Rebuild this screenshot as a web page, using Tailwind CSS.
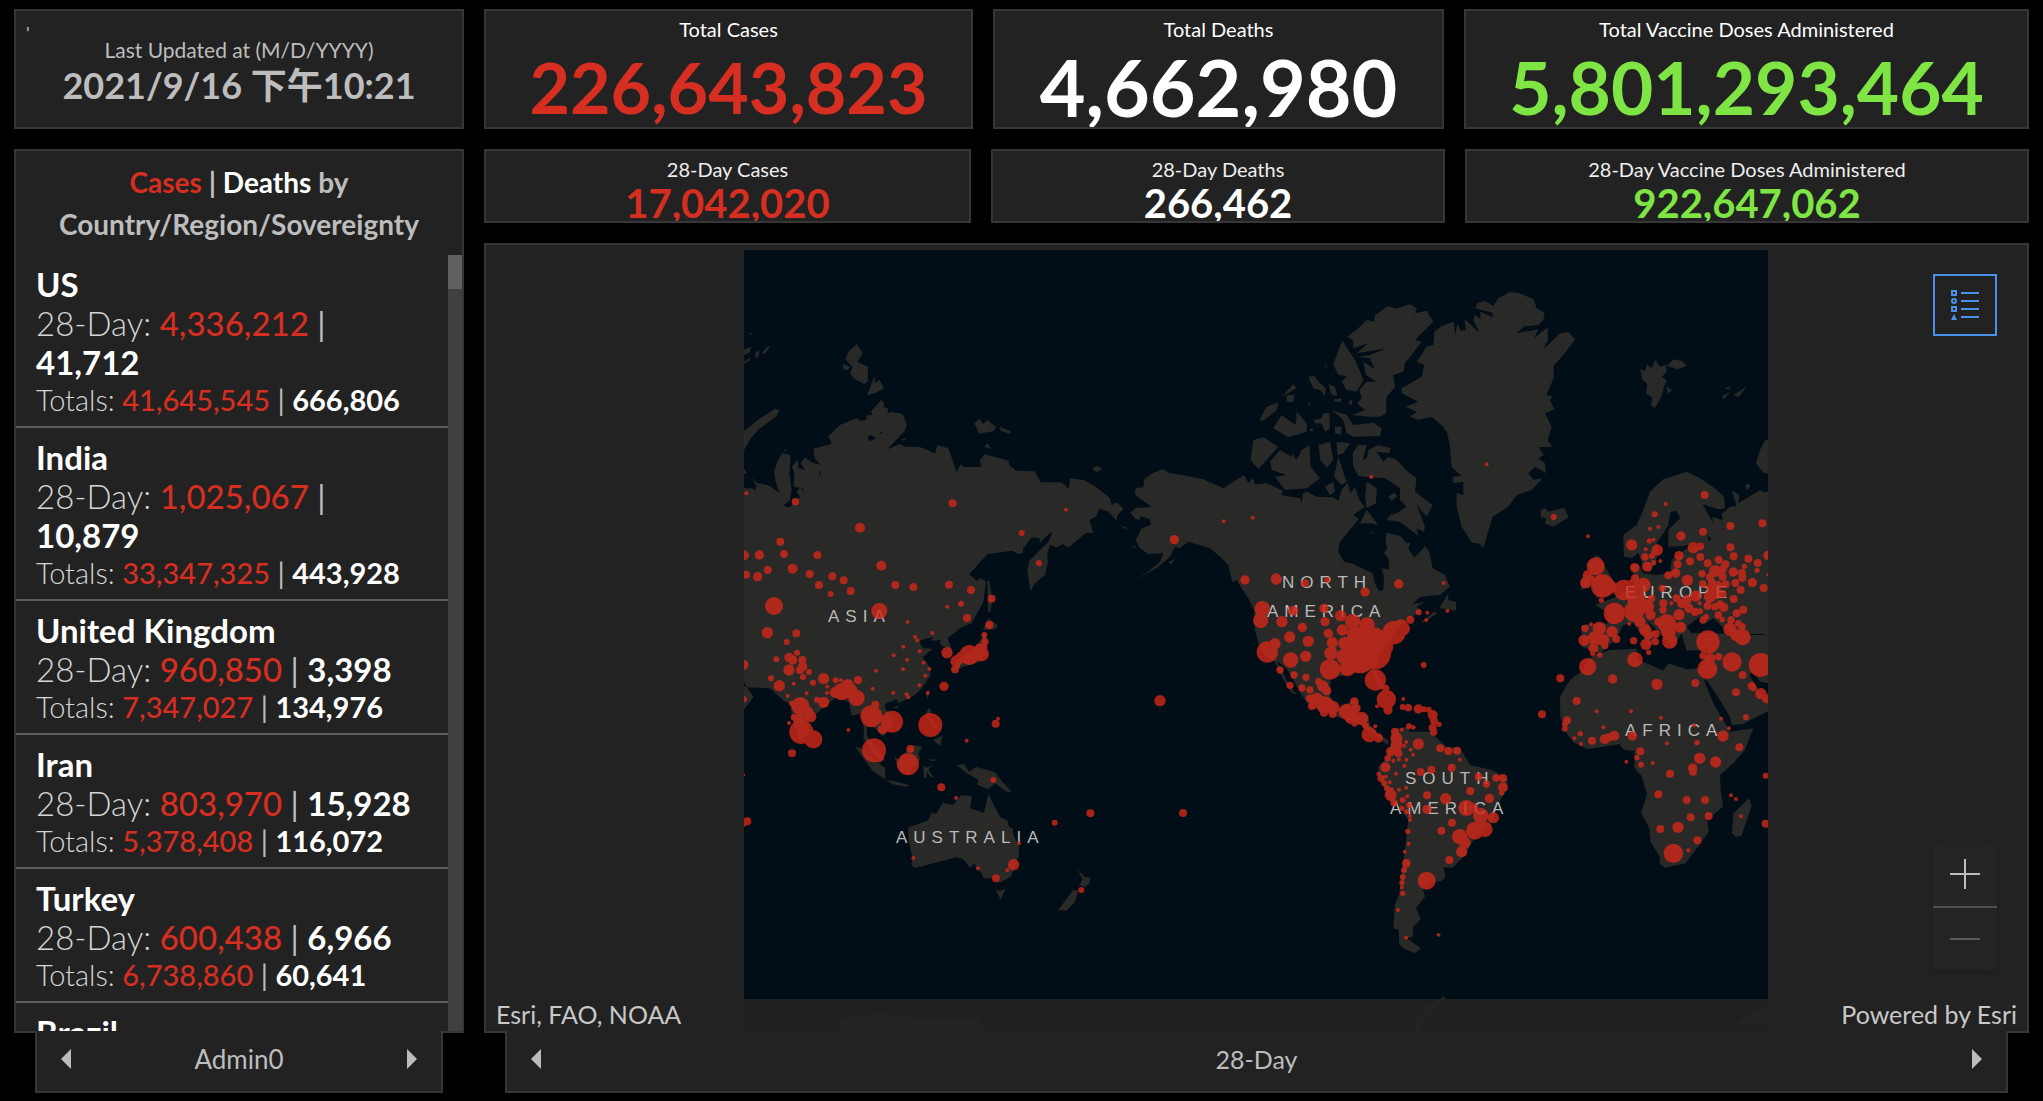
<!DOCTYPE html>
<html lang="en">
  <head>
    <meta charset="UTF-8" />
    <meta name="viewport" content="width=device-width, initial-scale=1.0" />
    <title>COVID-19 Dashboard</title>
    <script src="https://cdn.jsdelivr.net/npm/@tailwindcss/browser@4"></script>
  </head>
  <body class="bg-black font-['Lato','Noto_Sans_CJK_TC',sans-serif] text-[#bdbdbd]">
    <main class="grid h-screen grid-cols-[450px_1fr] gap-5 px-[14px] pt-[9px] pb-2">
      <!-- Left column -->
      <section class="flex min-h-0 flex-col gap-5">
        <div class="relative h-[120px] shrink-0 border-2 border-[#363636] bg-[#222] text-center">
          <span class="absolute top-3 left-[10px] text-lg leading-5">'</span>
          <p class="pt-6 text-[21px] leading-[30px]">Last Updated at (M/D/YYYY)</p>
          <p class="text-[36px] leading-[40px] font-bold">2021/9/16 下午10:21</p>
        </div>

        <div class="flex min-h-0 flex-1 flex-col">
          <div class="flex min-h-0 flex-1 flex-col border-2 border-[#363636] bg-[#222]">
            <h2 class="py-[10px] text-center text-[28px] leading-[42px] font-bold">
              <span class="text-[#d62e21]">Cases</span> |
              <span class="text-white">Deaths</span> by<br />Country/Region/Sovereignty
            </h2>
            <div class="flex min-h-0 flex-1">
              <ul id="countryList" class="flex-1 overflow-hidden"></ul>
              <div class="w-[14px] bg-[#404040]">
                <div class="h-[34px] bg-[#606060]"></div>
              </div>
            </div>
          </div>
          <nav class="relative mx-[21px] -mt-[2px] flex h-[62px] shrink-0 items-center justify-between border-2 border-t-0 border-[#363636] bg-[#222] px-6 pb-1">
            <button aria-label="Previous list">
              <svg width="10" height="20" viewBox="0 0 10 20" fill="#bdbdbd"><path d="M10 0v20L0 10z" /></svg>
            </button>
            <span class="text-[26px] leading-8">Admin0</span>
            <button aria-label="Next list">
              <svg width="10" height="20" viewBox="0 0 10 20" fill="#bdbdbd"><path d="M0 0v20l10-10z" /></svg>
            </button>
          </nav>
        </div>
      </section>

      <!-- Right column -->
      <section class="flex min-h-0 min-w-0 flex-col gap-5">
        <div class="grid h-[120px] shrink-0 grid-cols-[489fr_451fr_565fr] gap-5 text-center">
          <div class="overflow-hidden border-2 border-[#363636] bg-[#222]">
            <h3 class="pt-1 text-[20px] leading-[28px] text-white">Total Cases</h3>
            <p class="text-[70px] leading-[88px] font-bold text-[#d62e21]">226,643,823</p>
          </div>
          <div class="overflow-hidden border-2 border-[#363636] bg-[#222]">
            <h3 class="pt-1 text-[20px] leading-[28px] text-white">Total Deaths</h3>
            <p class="text-[79px] leading-[88px] font-bold text-white">4,662,980</p>
          </div>
          <div class="overflow-hidden border-2 border-[#363636] bg-[#222]">
            <h3 class="pt-1 text-[20px] leading-[28px] text-white">Total Vaccine Doses Administered</h3>
            <p class="text-[73px] leading-[88px] font-bold text-[#7ee544]">5,801,293,464</p>
          </div>
        </div>

        <div class="grid h-[74px] shrink-0 grid-cols-[487fr_454fr_564fr] gap-5 text-center">
          <div class="overflow-hidden border-2 border-[#363636] bg-[#222]">
            <h3 class="pt-1 text-[20px] leading-[28px] text-[#eee]">28-Day Cases</h3>
            <p class="text-[40px] leading-10 font-bold text-[#d62e21]">17,042,020</p>
          </div>
          <div class="overflow-hidden border-2 border-[#363636] bg-[#222]">
            <h3 class="pt-1 text-[20px] leading-[28px] text-[#eee]">28-Day Deaths</h3>
            <p class="text-[40px] leading-10 font-bold text-white">266,462</p>
          </div>
          <div class="overflow-hidden border-2 border-[#363636] bg-[#222]">
            <h3 class="pt-1 text-[20px] leading-[28px] text-[#eee]">28-Day Vaccine Doses Administered</h3>
            <p class="text-[40px] leading-10 font-bold text-[#7ee544]">922,647,062</p>
          </div>
        </div>

        <div class="flex min-h-0 flex-1 flex-col">
          <div class="relative flex min-h-0 flex-1 justify-center border-2 border-[#363636] bg-[#222] pt-[5px] pr-[2px]">
            <svg class="h-full w-[1024px]" viewBox="744 250 1024 781" preserveAspectRatio="xMidYMin slice">
              <rect x="744" y="250" width="1024" height="781" fill="#020e17" />
              <!-- Asia and Oceania -->
              <g transform="translate(740 240) scale(.33333)" fill="#292928">
                <path d="M0 740L12 745 38 745 44 752 50 740 36 712 50 728 85 736 118 758 108 730 102 695 112 665 126 640 152 646 148 700 155 750 150 780 130 796 148 803 165 785 180 770 170 755 180 742 195 758 188 745 160 740 164 700 156 680 172 660 176 685 196 690 182 670 195 652 218 668 242 675 224 655 220 626 275 611 265 588 300 555 352 534 358 542 378 540 380 526 396 525 394 512 424 480 434 492 430 500 443 505 444 520 455 515 489 523 500 555 495 572 442 628 480 612 495 620 540 621 585 640 592 615 625 625 650 697 663 672 670 681 724 681 720 660 735 643 806 662 808 675 828 692 884 694 903 727 965 727 987 747 990 715 1030 720 1070 742 1110 775 1115 795 1130 787 1151 806 1132 825 1130 842 1105 815 1078 805 1068 830 1048 840 1060 878 1038 878 985 923 968 912 950 922 930 915 922 940 924 965 915 1005 885 1030 871 1053 862 990 868 962 925 905 937 878 930 878 900 908 898 895 876 892 850 925 848 940 832 942 818 932 742 942 688 1003 710 1023 722 1014 738 1025 730 1085 695 1150 660 1165 622 1195 636 1230 608 1218 598 1208 605 1200 572 1202 580 1190 538 1202 548 1225 578 1226 548 1252 570 1282 572 1305 545 1345 525 1365 505 1375 475 1390 470 1378 435 1392 435 1405 460 1440 456 1460 428 1490 400 1460 380 1460 382 1490 425 1540 436 1562 420 1560 395 1535 370 1495 372 1470 365 1420 335 1427 328 1390 310 1375 285 1375 230 1420 205 1440 205 1480 180 1500 160 1450 150 1390 135 1385 120 1372 90 1345 20 1342 12 1326 0 1320zM0 1330L20 1342 41 1370 12 1408 0 1408z" />
                <path d="M28 282l10-6-4 8zM12 330L34 320 30 335 12 345zM44 345L50 332 58 335 52 356zM66 337L85 317 89 320 75 342zM12 365L32 352 28 362 12 372zM12 686l9 12-9 4zM130 628l10 2-3 6z" />
                <path d="M316 357L325 335 350 312 368 340 352 366 384 380 383 425 372 432 340 415 330 398 338 382zM309 373L332 380 322 390 310 388zM381 466L403 408 406 428 418 420 432 444 408 458z" />
                <path d="M12 573L60 535 105 506 119 510 108 530 60 565 35 592 12 630zM703 550L718 537 730 552 742 540 768 560 762 573 718 581zM780 560L815 575 808 581 782 572zM733 620L743 610 755 628zM1056 687L1072 677 1088 687 1070 696zM484 598l16-3-8 8zM1137 855l24 8-3 5zM1185 750l15-8v26l-15-8zM1170 817l30-16v38l-14-2z" />
                <path d="M742 1022L748 1022 757 1075 752 1115 744 1115zM728 1170L745 1135 773 1155 765 1168zM735 1180L742 1240 720 1265 640 1290 650 1260 700 1230zM558 1362L570 1344 563 1376zM458 1402L480 1396 468 1406zM555 1425L567 1403 573 1410 568 1430 600 1470 580 1460zM580 1500L608 1486 600 1518zM464 1552L475 1557 520 1515 547 1520 535 1540 540 1560 505 1605 475 1590z" />
                <path d="M346 1520L365 1525 435 1585 436 1618 400 1595 370 1555zM438 1620L470 1625 510 1636 500 1640 458 1633zM550 1575L560 1584 580 1573 565 1588 580 1611 572 1610 560 1596 560 1613 552 1613zM557 1558L596 1559 580 1563zM650 1575L672 1573 688 1596 708 1580 765 1597 778 1615 815 1655 800 1655 765 1630 745 1648 712 1635 715 1620 680 1600z" />
                <path d="M505 1763L565 1740 575 1718 588 1722 608 1688 640 1695 662 1666 696 1668 690 1705 732 1718 745 1663 780 1730 803 1742 806 1760 818 1765 820 1785 838 1820 836 1850 825 1880 812 1910 780 1928 770 1915 732 1915 722 1895 708 1885 704 1870 690 1884 670 1858 650 1852 525 1884 514 1875 518 1855 505 1800zM768 1950L782 1953 797 1945 782 1980zM1012 1888L1035 1912 1052 1912 1048 1930 1035 1942 1018 1935 1028 1918zM1000 1950L1015 1952 1005 1985 980 2012 954 2010z" />
                <path d="M300 2338L410 2322 480 2326 495 2322 530 2336 720 2336 740 2380H300z" />
                <path d="M383 593L390 584 407 593 396 603 386 600zM420 574l8 4-5 5zM240 690l4 16-5-2z" fill="#020e17" />
              </g>
              <!-- The Americas and Greenland -->
              <g transform="translate(1120 240) scale(.33333)" fill="#292928">
                <path d="M73 718L100 698 130 688 150 700 190 706 250 718 310 745 345 722 372 706 385 728 400 715 404 733 440 730 490 752 483 765 540 775 545 790 548 762 560 755 590 770 640 772 655 782 665 750 682 728 692 760 705 740 718 780 735 800 700 825 717 836 685 875 658 910 655 935 672 965 695 970 758 1000 765 1030 777 1053 790 1050 792 1010 784 985 808 988 805 955 792 940 802 925 796 905 800 878 840 888 860 910 872 908 865 925 882 953 900 935 915 918 928 935 938 985 975 1005 990 1040 960 1065 900 1070 878 1093 915 1085 890 1100 905 1112 870 1135 830 1170 810 1200 780 1240 765 1290 790 1340 780 1350 755 1292 700 1300 632 1315 630 1370 655 1405 700 1380 715 1385 710 1420 745 1430 750 1455 780 1487 805 1500 805 1515 770 1490 720 1455 650 1430 570 1400 545 1365 500 1285 470 1262 495 1310 510 1340 530 1363 515 1360 480 1300 465 1265 430 1240 415 1210 405 1170 402 1110 385 1075 365 1045 350 1020 337 1025 325 975 300 950 270 925 205 905 180 925 165 920 150 950 110 985 40 1022 80 998 120 965 130 940 85 942 60 925 47 900 65 865 92 855 90 838 35 820 45 805 95 800 45 765 48 745 70 742z" />
                <path d="M958 1105L985 1060 985 1080 1008 1085 1008 1112 985 1108zM905 1145L925 1130 940 1115 953 1120 908 1148zM37 920l10-4-3 8zM145 968l20-14-10 18z" />
                <path d="M943 275L965 258 1001 245 1006 285 1012 250 1022 272 1038 270 1033 236 1078 278 1060 240 1065 225 1082 238 1080 215 1120 232 1118 218 1066 205 1072 190 1095 182 1120 198 1135 175 1170 156 1200 160 1240 178 1250 205 1274 218 1270 240 1255 255 1210 260 1190 280 1255 268 1242 295 1283 262 1284 300 1270 328 1320 280 1345 276 1366 298 1330 345 1300 378 1302 410 1280 465 1298 470 1290 480 1303 508 1275 520 1295 560 1283 600 1297 620 1255 622 1272 645 1255 655 1275 670 1278 700 1245 680 1225 700 1240 720 1268 715 1235 750 1190 765 1165 800 1118 830 1090 923 1075 910 1055 908 1025 860 1010 800 1010 760 1030 765 1030 725 1000 730 998 710 1025 708 995 680 990 620 982 580 970 560 935 530 895 540 870 530 890 515 857 500 895 485 845 460 845 445 905 410 913 375 890 365 920 320 940 315zM1262 810L1275 803 1285 815 1333 804 1346 832 1300 860 1275 850 1280 835 1262 832z" />
                <path d="M682 290L715 265 740 240 762 245 765 225 805 198 830 206 870 193 890 205 885 220 920 212 940 245 915 270 885 300 905 305 855 370 850 395 820 405 825 440 800 470 798 520 780 530 745 530 695 525 735 510 710 490 725 475 718 450 740 425 770 425 738 405 730 365 765 388 750 355 715 350 750 345 800 325 710 340 745 310 700 325 700 300zM655 330L668 303 685 330 705 360 718 390 730 420 710 455 680 450 665 425 680 408 655 405 640 375zM637 510L680 525 700 555 760 548 785 565 780 588 700 590 680 580 670 540z" />
                <path d="M450 665L480 630 515 650 515 640 530 660 545 630 568 615 572 680 600 715 560 745 495 750 465 710 500 705 455 690zM400 600L430 592 475 620 440 660 415 687 392 660zM596 615L630 605 640 660 620 683 600 660zM650 605L690 610 670 640 652 645zM655 650L680 725 665 735 642 710zM615 740L640 725 645 755 630 765z" />
                <path d="M698 640L715 615 740 615 728 660 740 655 745 630 775 615 812 625 808 640 770 635 790 665 805 650 830 660 858 690 890 715 885 755 938 795 920 830 890 795 915 860 912 875 890 865 895 888 840 845 800 840 810 825 830 820 860 800 840 780 840 745 795 715 750 712 715 708 700 680zM720 850L740 810 775 855 750 850zM740 725L770 745 768 790 740 805 735 770zM805 770L822 758 832 768 815 782zM750 878l10-4-4 8z" />
                <path d="M460 565L485 525 512 545 528 555 530 515 560 550 560 575 505 592zM418 540L440 500 475 488 470 510 430 542zM565 410L582 408 600 430 617 445 615 468 600 450 580 445zM625 432L645 440 652 468 635 465zM485 470L520 433 530 445zM500 465L525 465 520 487 500 485zM580 540L605 535 610 520 628 520 630 565 615 575 605 550 585 550zM645 560L665 560 663 585 645 580zM560 480l12 14-4 3zM615 370l5 15-4-3zM642 478l22-3-2 11-18-1zM687 482l10-2-1 14-9-2zM570 567l8-2 1 8-8 1z" />
                <path d="M820 1470L860 1460 870 1475 930 1475 980 1520 1020 1525 1050 1575 1115 1590 1163 1615 1160 1650 1135 1690 1120 1740 1060 1800 1035 1845 998 1883 970 1882 977 1910 965 1922 945 1925 908 1945 915 1970 888 2005 902 2037 880 2060 878 2090 860 2095 902 2125 885 2140 850 2125 838 2112 836 2070 820 2065 825 1995 838 1960 845 1900 855 1830 865 1740 840 1705 805 1680 775 1600 775 1580 800 1555 815 1500zM947 2080l18 3-8 9z" />
                <path d="M875 2360L885 2340 920 2308 915 2295 932 2297 970 2270 977 2275 935 2315 935 2330 920 2325 895 2370 888 2370z" />
              </g>
              <!-- Europe and Africa -->
              <g transform="translate(1500 440) scale(.33333)" fill="#292928">
                <path d="M370 285L410 255 430 210 450 155 490 118 560 95 600 115 640 142 672 170 675 205 655 208 608 193 640 250 636 230 668 240 665 222 690 200 710 198 695 150 718 165 715 190 780 150 790 157 810 152 810 730 780 725 760 695 748 705 790 770 810 775 810 812 770 830 730 852 695 855 690 830 660 780 618 718 612 722 640 790 670 840 690 875 760 865 735 930 700 970 660 1005 662 1050 669 1100 622 1140 626 1175 602 1210 557 1270 496 1283 480 1272 479 1250 452 1205 448 1165 423 1118 441 1063 425 1008 403 983 403 933 373 930 358 913 263 927 222 908 193 870 181 830 180 770 210 720 250 690 265 660 280 645 330 630 410 626 412 660 440 670 490 692 505 670 560 688 600 685 610 660 625 628 560 632 550 600 545 580 520 620 470 570 440 540 470 590 450 620 400 550 370 555 345 600 300 640 245 620 245 555 325 550 320 515 285 495 350 470 400 440 400 400 392 375 415 372 430 400 470 405 510 400 515 360 560 325 610 318 600 305 550 318 505 320 505 270 540 235 530 213 512 215 505 255 490 280 470 310 475 340 460 380 450 398 430 380 415 338 395 354 372 350zM265 370L290 345 300 350 312 375 350 440 345 460 290 475 280 440zM245 410L275 400 270 440 243 450zM768 70L780 30 796 0 810 0 810 102 790 98zM735 138L743 130 752 138 742 150zM748 1075L755 1098 724 1188 707 1190 696 1180 700 1120z" />
                <path d="M560 560L600 530 620 548 640 535 690 582 620 578 575 580zM620 290L633 290 630 305zM750 582h45v3h-45zM430 650l60 0 0 4-60 0z" fill="#020e17" />
                <!-- Svalbard -->
                <path d="M420-212L436-208 440-228 455-216 466-240 480-220 498-226 500-206 486-190 500-178 492-160 484-128 464-96 452-104 458-126 438-140 442-168 428-180zM500-222L520-242 548-236 560-222 532-212zM500-160L516-150 504-138zM665-130L690-145 672-122zM700-135L740-160 715-128zM675-155l18-6-8 10z" />
                <path d="M725 1740L770 1710 804 1702V1760H700z" />
              </g>
              <g fill="#b9b9b9" font-family="Liberation Sans, sans-serif" font-size="17" letter-spacing="6">
                <text x="828" y="622">ASIA</text>
                <text x="1282" y="588">NORTH</text>
                <text x="1267" y="617">AMERICA</text>
                <text x="1405" y="784">SOUTH</text>
                <text x="1390" y="814">AMERICA</text>
                <text x="896" y="843">AUSTRALIA</text>
                <text x="1625" y="598">EUROPE</text>
                <text x="1625" y="736">AFRICA</text>
              </g>
              <g id="bubbles" fill="#d22819" opacity=".8"></g>
            </svg>

            <button aria-label="Legend" class="absolute top-[29px] right-[30px] flex h-[62px] w-16 items-center justify-center border-2 border-[#4a90e8] bg-[#222]">
              <svg width="28" height="32" viewBox="0 0 28 32" fill="none" stroke="#4a90e8" stroke-width="2">
                <path d="M10 4h18M10 12h18M10 20h18M10 28h18" />
                <path d="M1 2h4v4H1zM1 18h4v4H1z" />
                <circle cx="3" cy="12" r="2" />
                <path d="M3 25l3 6H0z" fill="#4a90e8" stroke="none" />
              </svg>
            </button>
            <div class="absolute right-[30px] bottom-[61px] flex w-16 flex-col bg-[#242424] shadow-md">
              <button aria-label="Zoom in" class="flex h-16 items-center justify-center">
                <svg width="30" height="30" viewBox="0 0 30 30" stroke="#bdbdbd" stroke-width="2"><path d="M0 15h30M15 0v30" /></svg>
              </button>
              <button aria-label="Zoom out" class="flex h-16 items-center justify-center border-t-2 border-[#505050]">
                <svg width="30" height="30" viewBox="0 0 30 30" stroke="#5c5c5c" stroke-width="2"><path d="M0 15h30" /></svg>
              </button>
            </div>
            <div class="absolute inset-x-0 bottom-0 flex h-8 justify-between bg-[#222]/90 px-[10px] text-[25px] leading-[30px] text-[#c8c8c8]">
              <span>Esri, FAO, NOAA</span>
              <a href="#">Powered by Esri</a>
            </div>
          </div>
          <nav class="relative mx-[21px] -mt-[2px] flex h-[62px] shrink-0 items-center justify-between border-2 border-t-0 border-[#363636] bg-[#222] px-6 pb-1">
            <button aria-label="Previous map">
              <svg width="10" height="20" viewBox="0 0 10 20" fill="#bdbdbd"><path d="M10 0v20L0 10z" /></svg>
            </button>
            <span class="text-[25px] leading-8">28-Day</span>
            <button aria-label="Next map">
              <svg width="10" height="20" viewBox="0 0 10 20" fill="#bdbdbd"><path d="M0 0v20l10-10z" /></svg>
            </button>
          </nav>
        </div>
      </section>
    </main>

    <script>
      const countries = [
        { name: "US", cases28: "4,336,212", deaths28: "41,712", cases: "41,645,545", deaths: "666,806" },
        { name: "India", cases28: "1,025,067", deaths28: "10,879", cases: "33,347,325", deaths: "443,928" },
        { name: "United Kingdom", cases28: "960,850", deaths28: "3,398", cases: "7,347,027", deaths: "134,976" },
        { name: "Iran", cases28: "803,970", deaths28: "15,928", cases: "5,378,408", deaths: "116,072" },
        { name: "Turkey", cases28: "600,438", deaths28: "6,966", cases: "6,738,860", deaths: "60,641" },
        { name: "Brazil", cases28: "592,357", deaths28: "15,370", cases: "21,034,610", deaths: "588,597" },
      ];

      document.getElementById("countryList").innerHTML = countries
        .map(
          (c) => `
          <li class="border-b-2 border-[#5c5c5c] pt-[10px] pr-5 pb-2 pl-5 text-[33px] leading-[39px]">
            <h4 class="font-bold text-white">${c.name}</h4>
            <p><span class="font-light text-[#d6d6d6]">28-Day:</span> <span class="font-medium text-[#d62e21]">${c.cases28}</span> | <strong class="text-white">${c.deaths28}</strong></p>
            <p class="text-[29px] leading-9"><span class="font-light text-[#d6d6d6]">Totals:</span> <span class="font-medium text-[#d62e21]">${c.cases}</span> | <strong class="text-white">${c.deaths}</strong></p>
          </li>`
        )
        .join("");

      // x,y,radius in thirds of a map unit, relative to each region's origin
      const regions = [
        {
          x: 740,
          y: 240,
          points:
            "19,760,6 166,785,11 638,790,12 978,809,6 845,879,9 360,863,15 121,905,12 12,946,15 58,945,14 132,942,12 232,945,12 424,977,15 897,969,9 158,986,15 83,990,12 18,1004,12 53,1010,14 209,1002,12 277,1009,12 311,1021,12 237,1035,12 332,1053,12 272,1062,9 466,1035,12 520,1041,12 627,1034,12 693,1050,12 755,1076,12 663,1091,9 622,1100,6 102,1098,27 418,1113,24 503,1146,6 681,1134,12 748,1155,12 82,1178,17 169,1180,12 577,1179,6 525,1191,6",
        },
        {
          x: 740,
          y: 600,
          points:
            "140,126,9 532,121,6 490,140,6 539,154,6 461,166,6 501,179,6 551,188,6 568,207,6 489,208,6 408,212,6 556,227,6 538,256,6 398,266,6 460,278,6 500,283,6 505,292,6 563,279,6 612,259,14 621,158,17 733,105,9 735,125,11 730,140,12 718,145,14 725,162,22 700,158,18 688,165,30 665,172,18 650,182,17 645,185,14 650,197,10 645,208,12 109,178,9 171,158,9 147,173,14 158,180,14 187,180,12 147,210,17 180,210,12 188,200,14 207,216,9 189,231,9 93,235,9 118,257,17 161,251,6 219,248,9 251,236,17 287,241,9 303,241,6 354,240,12 323,255,18 262,260,6 261,279,6 200,280,6 143,288,6 10,194,15 12,298,9 285,277,16 305,275,26 328,272,24 350,294,24 251,307,17 231,299,9 181,318,27 205,335,15 212,350,17 162,352,10 180,360,20 184,396,36 220,418,27 147,369,6 155,310,8 156,460,12 325,390,6 394,349,33 406,314,12 428,388,15 456,365,33 402,451,36 415,470,17 511,447,12 504,493,33 571,375,36 604,562,12 648,594,6 680,422,6 767,371,12 774,356,6 760,540,9 944,668,9 1051,640,12 837,730,6 821,794,17 802,811,6 768,835,12 714,805,6 520,774,6 1024,870,9 12,525,4 22,664,12 10,668,12",
        },
        {
          x: 1120,
          y: 240,
          points:
            "1100,673,6 754,711,6 311,844,6 398,833,6 163,899,14 375,1020,14 469,1017,17 555,1030,12 621,1020,9 735,1056,14 836,1032,14 971,1029,6 896,1117,9 922,1118,6 982,1112,6 919,1140,6 871,1139,12",
        },
        {
          x: 1120,
          y: 600,
          points:
            "427,26,23 422,61,23 519,32,15 486,65,17 612,25,14 615,65,14 662,47,17 698,65,23 741,75,23 547,82,14 509,111,17 565,124,17 625,100,14 667,90,17 557,169,17 512,180,23 442,156,32 465,131,17 637,128,17 633,160,20 630,208,31 675,130,20 675,170,25 682,205,24 705,102,24 735,100,24 765,108,26 790,115,26 720,125,40 760,130,45 720,180,40 765,160,48 790,140,30 822,98,35 843,80,22 850,86,20 766,240,32 799,298,29 797,265,11 804,330,14 850,297,6 771,319,6 848,321,9 865,323,11 895,327,14 912,328,9 926,329,9 938,345,15 942,362,12 957,373,8 938,383,12 941,396,11 480,210,11 522,225,11 558,232,11 510,256,11 546,264,11 570,270,11 596,245,11 608,258,17 620,272,14 568,295,11 576,318,12 590,300,22 615,315,26 638,322,20 612,338,12 638,342,12 680,335,24 703,305,13 708,325,14 697,350,24 725,355,20 704,370,10 737,378,10 766,379,6 748,404,23 775,414,14 825,395,12 845,389,6 867,379,9 880,382,7 829,415,18 830,435,18 812,455,14 835,460,12 803,475,10 820,482,6 837,478,6 859,426,6 853,437,6 872,449,6 879,464,6 859,479,6 853,498,6 895,432,17 961,445,12 985,453,12 1011,452,12 1019,479,6 995,503,12 934,509,12 902,516,12 796,502,15 828,521,6 776,522,7 783,535,11 798,530,6 792,550,9 809,547,6 801,565,9 812,585,18 815,568,6 837,569,6 859,563,6 862,589,6 848,600,9 822,608,11 845,625,8 867,616,9 860,635,8 870,648,6 870,660,6 863,694,8 866,731,6 854,755,6 859,790,13 852,810,9 848,831,9 846,848,8 846,862,6 848,880,8 834,930,6 858,1013,6 955,1005,5 920,842,27 988,780,12 1025,755,17 1034,728,18 1019,710,23 1065,692,27 1095,688,23 1120,653,17 1082,647,23 1039,624,24 1060,625,15 977,596,17 921,586,12 921,628,14 996,668,12 964,692,12 1051,573,12 1108,595,14 1099,552,11 1076,530,12 1128,534,11 1149,534,12 1149,562,15 1145,578,8 120,302,17 189,639,12 911,195,9",
        },
        {
          x: 1500,
          y: 440,
          points:
            "161,231,9 614,165,12 497,192,6 464,223,9 475,261,6 450,266,6 609,275,12 543,288,14 691,258,12 787,250,12 264,289,6 395,315,17 448,303,8 461,299,6 437,328,6 472,330,17 456,348,9 462,335,8 435,351,11 461,368,8 441,380,15 481,363,6 404,383,14 580,323,17 600,319,12 537,347,14 691,322,12 601,351,12 570,364,12 701,349,12 745,356,12 656,359,12 533,373,12 623,370,12 676,373,12 733,379,8 773,369,12 804,346,14 771,391,8 804,404,5 505,406,12 527,399,14 562,421,17 606,401,11 645,393,18 668,388,12 668,410,12 630,412,12 700,396,14 726,398,12 727,413,12 706,429,12 757,428,14 791,444,12 722,450,12 608,432,11 636,428,12 655,435,12 677,433,12 487,445,11 287,379,27 262,405,14 257,428,17 272,418,12 308,438,35 330,440,20 304,481,8 372,450,31 405,445,30 430,435,22 405,415,12 395,465,20 410,480,28 343,520,32 402,515,30 420,545,17 440,500,22 452,525,15 435,570,18 445,585,14 467,582,12 388,551,6 438,613,17 446,637,8 466,605,11 401,602,11 455,475,11 490,490,12 514,490,6 489,510,11 475,545,12 500,550,28 505,575,22 509,603,23 541,562,17 537,524,17 545,490,14 530,475,12 567,505,14 585,516,12 600,514,9 587,468,17 560,480,15 635,445,17 630,470,18 650,460,17 668,462,12 623,497,12 645,500,11 599,490,6 671,502,14 660,492,11 655,525,11 667,539,8 609,540,11 618,531,9 701,477,12 730,509,12 710,520,12 693,540,11 690,568,20 708,585,18 728,592,24 726,560,11 715,550,10 255,565,11 273,553,6 298,565,20 336,575,17 252,601,17 285,595,22 310,600,18 349,597,12 280,625,15 278,640,8 299,645,8 315,618,10 263,680,26 405,659,23 338,717,14 471,733,17 181,715,12 230,783,12 290,814,6 393,814,6 483,833,6 310,862,6 126,823,12 201,841,12 195,852,9 194,866,9 241,881,8 586,729,12 624,606,35 609,647,11 631,655,15 622,687,30 656,650,11 696,666,29 782,675,36 728,705,12 708,757,12 755,738,12 760,744,10 783,761,17 800,776,14 738,832,9 663,836,6 687,865,6 582,856,6 223,895,6 243,912,6 276,902,12 314,898,15 328,892,12 343,887,15 397,888,14 421,934,12 411,953,8 423,974,9 379,965,6 458,969,6 501,910,6 591,908,8 669,888,17 718,922,12 599,955,17 647,966,17 578,984,14 579,995,12 510,1001,12 475,1063,12 560,1080,12 615,1080,12 572,1132,12 626,1128,12 534,1162,17 481,1167,12 592,1201,12 565,1231,6 520,1240,29 693,1066,6 708,1077,6 723,1129,6 797,1007,9 797,1151,12",
        },
      ];

      function drawBubbles() {
        const group = document.getElementById("bubbles");
        regions.forEach((region) => {
          region.points.split(" ").forEach((point) => {
            const [x, y, r] = point.split(",").map(Number);
            const circle = document.createElementNS("http://www.w3.org/2000/svg", "circle");
            circle.setAttribute("cx", region.x + x / 3);
            circle.setAttribute("cy", region.y + y / 3);
            circle.setAttribute("r", r / 3);
            group.appendChild(circle);
          });
        });
      }

      drawBubbles();
    </script>
  </body>
</html>
